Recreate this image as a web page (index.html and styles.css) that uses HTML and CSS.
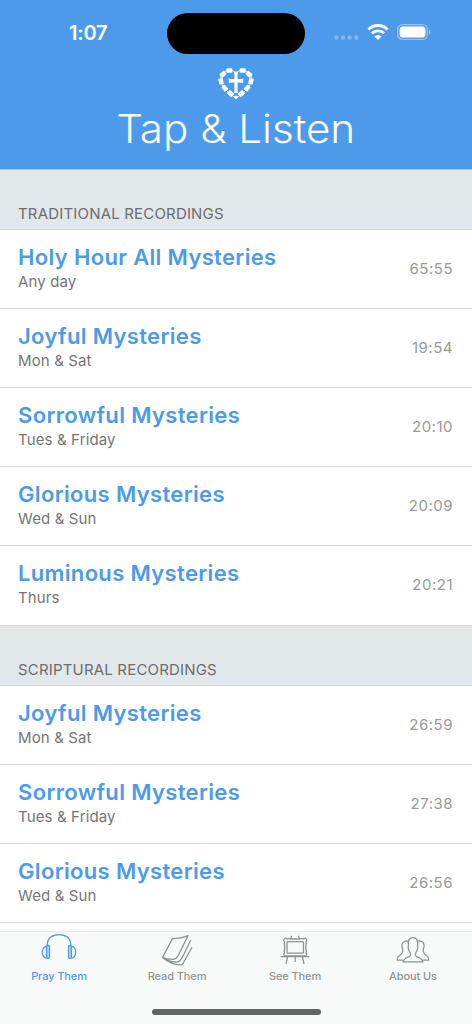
FILE: index.html
```html
<!DOCTYPE html>
<html lang="en">
<head>
<meta charset="utf-8">
<title>Tap &amp; Listen</title>
<link rel="stylesheet" href="styles.css">
</head>
<body>
<div class="screen">
  <header class="header">
    <div class="status">
      <span class="clock">1:07</span>
      <span class="island"></span>
      <span class="indicators">
        <svg class="signal" width="25" height="5" viewBox="0 0 25 5"><circle cx="2.4" cy="2.5" r="2.2"/><circle cx="9" cy="2.5" r="2.2"/><circle cx="15.6" cy="2.5" r="2.2"/><circle cx="22.2" cy="2.5" r="2.2"/></svg>
        <svg class="wifi" width="22" height="16" viewBox="0 0 22 16"><path d="M1.400 5.400a13.800 13.800 0 0 1 19.200 0M4.900 9.300a8.800 8.800 0 0 1 12.200 0"/><path class="solid" d="M11 16 7.400 12.500a5 5 0 0 1 7.200 0Z"/></svg>
        <svg class="battery" width="35" height="16" viewBox="0 0 35 16"><rect class="shell" x=".7" y=".7" width="29.600" height="14.600" rx="4.600"/><rect x="2.600" y="2.600" width="25.800" height="10.800" rx="3"/><path class="cap" d="M32 5.500q1.800.7 1.800 2.500t-1.800 2.500Z"/></svg>
      </span>
    </div>
    <svg class="logo" width="36" height="34" viewBox="0 0 36 34">
      <path class="cord" d="M18 7.500C16 3.500 13 2.500 10 3.300 4 5 1.500 10 3 15c2 7 8.500 12 15 16C24.500 27 31 22 33 15c1.500-5-1-10-7-11.700C23 2.500 20 3.500 18 7.500Z"/>
      <g class="beads">
        <rect x="8.300" y="1.200" width="6" height="4.600" rx=".6"/><rect x="21.700" y="1.200" width="6" height="4.600" rx=".6"/>
        <rect x="2" y="5" width="6" height="4.600" rx=".6" transform="rotate(-45 5 7.300)"/><rect x="28" y="5" width="6" height="4.600" rx=".6" transform="rotate(45 31 7.300)"/>
        <rect x="0" y="12" width="6" height="4.600" rx=".6" transform="rotate(78 3 14.300)"/><rect x="30" y="12" width="6" height="4.600" rx=".6" transform="rotate(-78 33 14.300)"/>
        <rect x="3.800" y="18.900" width="6" height="4.600" rx=".6" transform="rotate(50 6.800 21.200)"/><rect x="26.200" y="18.900" width="6" height="4.600" rx=".6" transform="rotate(-50 29.200 21.200)"/>
        <rect x="9.600" y="24.300" width="6" height="4.600" rx=".6" transform="rotate(40 12.600 26.600)"/><rect x="20.400" y="24.300" width="6" height="4.600" rx=".6" transform="rotate(-40 23.400 26.600)"/>
        <circle cx="18" cy="30.300" r="1.800"/>
      </g>
      <path class="cross" d="M15.700 4.500h4.600L19.600 7v5.200l4.200-.1 1.400-.6v4.800l-1.400-.6-4.200-.1V24l.7 2h-4.600l.7-2v-8.400l-4.200.1-1.400.6v-4.800l1.400.6 4.200.1V7Z"/>
    </svg>
    <h1 class="title">Tap &amp; Listen</h1>
  </header>

  <main class="content">
    <section class="group">
      <h2 class="section-title">TRADITIONAL RECORDINGS</h2>
      <div class="row"><div><h3 class="name">Holy Hour All Mysteries</h3><p class="days">Any day</p></div><span class="time">65:55</span></div>
      <div class="row"><div><h3 class="name">Joyful Mysteries</h3><p class="days">Mon &amp; Sat</p></div><span class="time">19:54</span></div>
      <div class="row"><div><h3 class="name">Sorrowful Mysteries</h3><p class="days">Tues &amp; Friday</p></div><span class="time">20:10</span></div>
      <div class="row"><div><h3 class="name">Glorious Mysteries</h3><p class="days">Wed &amp; Sun</p></div><span class="time">20:09</span></div>
      <div class="row"><div><h3 class="name">Luminous Mysteries</h3><p class="days">Thurs</p></div><span class="time">20:21</span></div>
    </section>
    <section class="group">
      <h2 class="section-title">SCRIPTURAL RECORDINGS</h2>
      <div class="row"><div><h3 class="name">Joyful Mysteries</h3><p class="days">Mon &amp; Sat</p></div><span class="time">26:59</span></div>
      <div class="row"><div><h3 class="name">Sorrowful Mysteries</h3><p class="days">Tues &amp; Friday</p></div><span class="time">27:38</span></div>
      <div class="row"><div><h3 class="name">Glorious Mysteries</h3><p class="days">Wed &amp; Sun</p></div><span class="time">26:56</span></div>
    </section>
  </main>

  <footer class="footer">
    <nav class="tabs">
      <div class="tab active">
        <svg width="36" height="34" viewBox="0 0 36 34"><path d="M6.300 15v-2.500C6.300 6.500 11 2.600 18 2.600s11.700 3.900 11.700 9.900V15M5.500 14.200C0 15.500 0 25 5.500 26.300M30.500 14.200c5.500 1.300 5.500 10.800 0 12.100"/><rect class="pad" x="5.600" y="13.500" width="2.900" height="12.800" rx="1"/><rect class="pad" x="27.500" y="13.500" width="2.900" height="12.800" rx="1"/></svg>
        <span>Pray Them</span>
      </div>
      <div class="tab">
        <svg width="36" height="34" viewBox="0 0 36 34"><path d="M13.500 6.600c5 0 10-.6 15.500-3L20.500 21c-1.800 4.800-3.500 6.300-6.500 6.300-4.500 0-8-.8-10.500-1.900ZM31.800 8l-8 16.500c-2 4.500-3.500 5.500-6.500 5.500-5.500-.5-10-1.700-13.800-4.600M33 15.300l-9.600 17.200c-6.500.7-13.400-1.700-19.900-7.100"/></svg>
        <span>Read Them</span>
      </div>
      <div class="tab">
        <svg width="36" height="34" viewBox="0 0 36 34"><rect x="10" y="9.700" width="16.500" height="11.500" rx="1"/><path d="M7.200 7q1.300-1.800 3.100 0 1.500-.9 3 0h9.900q1.500-.9 3 0 1.800-1.800 3.100 0 1.200 1.500-.4 3.100 1 1.500 0 3v4.700q1 1.500 0 3 1.600 1.600.4 3.100H7.200q-1.200-1.500.4-3.100-1-1.500 0-3v-4.700q-1-1.500 0-3Q6 8.500 7.200 7ZM14.600 3.700 13.500 7M21.400 3.700 22.500 7M3.500 24.700h29M10.500 25 9 32M18.200 25v5M25.500 25l1.500 7"/></svg>
        <span>See Them</span>
      </div>
      <div class="tab">
        <svg width="36" height="34" viewBox="0 0 36 34"><path d="M14.300 24.600c1.200-.7 1.600-2.200 1-3.200-.2-1.300-1.100-2-1.400-3.300-.8-1.400-1.100-2.200-.5-4.600-.9-5 1.100-7.900 4.600-7.900s5.500 2.900 4.600 7.900c.6 2.400.3 3.200-.5 4.600-.3 1.300-1.200 2-1.400 3.300-.6 1-.2 2.500 1 3.200 2.500 1 5.500 1.400 6.300 5.200H8c.8-3.800 3.800-4.200 6.300-5.200M13.800 9.300C10 7.900 7.500 10 7 12.600c-.5 3.200 1.200 3.900.7 7.100-.5 3-3.500 3.600-4.500 4.900-.8 1.200-.8 2-1 3.500h5.500M22.200 9.300C26 7.900 28.500 10 29 12.600c.5 3.200-1.200 3.900-.7 7.100.5 3 3.500 3.600 4.500 4.900.8 1.200.8 2 1 3.500h-5.500"/></svg>
        <span>About Us</span>
      </div>
    </nav>
    <div class="home"></div>
  </footer>
</div>
</body>
</html>
```
FILE: styles.css
```css
* { box-sizing: border-box; margin: 0; padding: 0; }
body { font-family: Inter, "Liberation Sans", sans-serif; background: #fff; }
.screen { width: 472px; height: 1024px; display: flex; flex-direction: column; overflow: hidden; }
svg { display: block; }

.header { height: 170px; flex: none; background: #4d9aeb; color: #fff; display: flex; flex-direction: column; align-items: center; border-bottom: 1px solid #a9c8e8; }
.status { width: 100%; height: 66px; display: grid; grid-template-columns: 167px 138px 167px; align-items: center; }
.clock { padding-left: 69px; font-size: 20px; font-weight: 600; letter-spacing: -0.2px; }
.island { height: 41px; border-radius: 21px; background: #000; }
.indicators { display: flex; padding: 0 0 2px 29px; align-items: center; }
.signal { fill: #82b7f1; margin-top: 11px; }
.wifi { margin-left: 8px; fill: none; stroke: #fff; stroke-width: 2.8; }
.wifi .solid { fill: #fff; stroke: none; }
.battery { margin-left: 8px; fill: #fff; }
.battery .shell { fill: none; stroke: #94c2f3; stroke-width: 1.3; }
.battery .cap { fill: #94c2f3; }
.logo { margin-top: 1px; fill: #fff; }
.cord { fill: none; stroke: #fff; stroke-width: 1; }
.cross { fill: #fff; }
.title { margin-top: 4px; font-size: 39px; line-height: 48px; font-weight: 300; white-space: nowrap; transform: scaleX(1.08); }

.content { flex: 1; min-height: 0; overflow: hidden; }
.section-title { height: 60px; padding: 34px 18px 0; background: #e2e7ea; border-bottom: 1px solid #d5d9dc; color: #6b6d6f; font-size: 15px; line-height: 20px; font-weight: 400; letter-spacing: .18px; }
.row { height: 79px; display: flex; justify-content: space-between; align-items: flex-start; padding: 14px 19px 0 18px; border-bottom: 1px solid #d6d6d8; }
.group:first-child .row:last-child { height: 80px; }
.name { color: #4d9aeb; font-size: 22px; line-height: 26px; font-weight: 600; letter-spacing: .34px; }
.days { color: #757575; font-size: 15px; line-height: 20px; letter-spacing: .13px; margin-top: 2px; }
.time { color: #999; font-size: 15px; line-height: 20px; letter-spacing: .5px; margin-top: 15px; }

.footer { height: 93px; flex: none; background: #f8f9f9; border-top: 1px solid #e6e7e8; }
.tabs { display: grid; grid-template-columns: repeat(4, 1fr); height: 77px; }
.tab { display: flex; flex-direction: column; align-items: center; color: #929292; font-size: 11px; line-height: 16px; font-weight: 500; letter-spacing: -.1px; }
.tab svg { fill: none; stroke: currentColor; stroke-width: 1.3; stroke-linejoin: round; }
.tab span { margin-top: 2px; }
.tab.active { color: #4d9aeb; }
.tab .pad { fill: #b8d7f7; }
.home { width: 169px; height: 6px; margin: 0 auto; border-radius: 3px; background: #636565; }
```
